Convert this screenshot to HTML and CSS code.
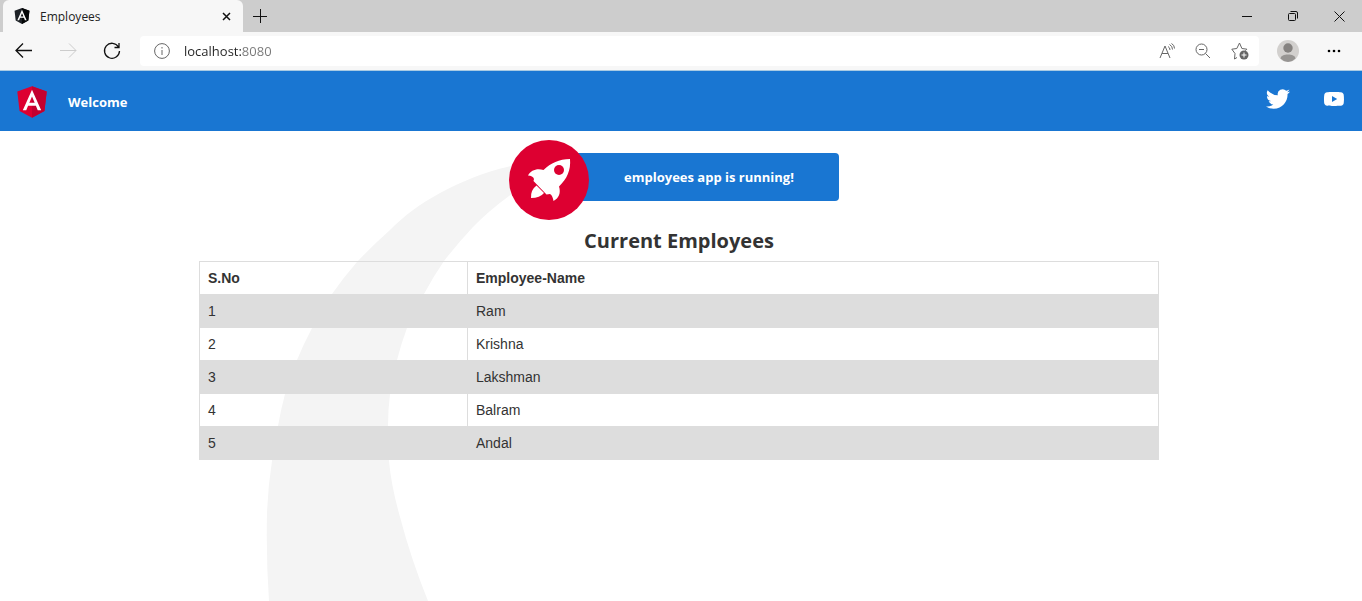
FILE: index.html
```html
<!DOCTYPE html>
<html lang="en">
<head>
<meta charset="utf-8">
<title>Employees</title>
<link rel="stylesheet" href="styles.css">
</head>
<body>
<div class="tab-strip">
  <div class="tab">
    <svg class="tab-icon" viewBox="30 30 190 200" aria-hidden="true"><path fill="#1d2126" d="M125 30 31.9 63.2l14.2 123.1L125 230l78.9-43.7 14.2-123.1z"/><path fill="#050708" d="M125 30v200l78.9-43.7 14.2-123.1z"/><path fill="#fff" d="M125 52.1 66.8 182.6h21.7l11.7-29.2h49.4l11.7 29.2H183zm17 83.3h-34l17-40.9z"/></svg>
    <span class="tab-title">Employees</span>
    <button class="icon-button" aria-label="Close tab"><svg width="9" height="9" viewBox="0 0 9 9"><path class="line bold" d="M1 1l7 7M8 1 1 8"/></svg></button>
  </div>
  <button class="icon-button new-tab" aria-label="New tab"><svg width="14" height="14" viewBox="0 0 14 14"><path class="line" d="M7.500 0v14M0 7.500h14"/></svg></button>
  <div class="window-controls">
    <button class="icon-button" aria-label="Minimize"><svg width="10" height="10" viewBox="0 0 10 10"><path class="line" d="M0 5.500h10"/></svg></button>
    <button class="icon-button" aria-label="Restore"><svg width="10" height="10" viewBox="0 0 10 10"><rect class="line" x=".5" y="2.5" width="7" height="7" rx="1"/><path class="line" d="M2.500.5H8Q9.500.5 9.500 2v5.500"/></svg></button>
    <button class="icon-button" aria-label="Close"><svg width="11" height="11" viewBox="0 0 11 11"><path class="line" d="M.5.5l10 10M10.500.5l-10 10"/></svg></button>
  </div>
</div>
<div class="nav-bar">
  <div class="nav-buttons">
    <button class="icon-button" aria-label="Back"><svg width="18" height="16" viewBox="0 0 18 16"><path class="line thick" d="M17 7.500H1M8 .5l-7 7 7 7"/></svg></button>
    <button class="icon-button faded" aria-label="Forward" disabled><svg width="18" height="16" viewBox="0 0 18 16"><path class="line" d="M1 7.500h16M10 .5l7 7-7 7"/></svg></button>
    <button class="icon-button" aria-label="Refresh"><svg width="18" height="18" viewBox="0 0 18 18"><path class="line thick" d="M15.500 5A7.500 7.500 0 1 0 16.500 9M16 1v4.500h-4.500"/></svg></button>
  </div>
  <div class="address-bar">
    <button class="icon-button grey" aria-label="Site information"><svg width="16" height="16" viewBox="0 0 16 16"><circle class="line" cx="8" cy="8" r="7.400"/><path class="line" d="M8 7v5M8 4v1.500"/></svg></button>
    <input class="address" type="text" value="localhost:8080" aria-label="Address" spellcheck="false">
    <div class="address-actions">
      <button class="icon-button grey" aria-label="Read aloud"><svg width="16" height="16" viewBox="0 0 16 16"><path class="line" d="M1 15 6 3l5 12M3 10.500h6M9 3.500q2 1 2 3.500M10.500 1.500Q13.500 3 13.500 6.500M12.500.5Q15.500 2 15.500 5.500"/></svg></button>
      <button class="icon-button grey" aria-label="Zoom out"><svg width="16" height="16" viewBox="0 0 16 16"><circle class="line" cx="6.500" cy="6.500" r="5.500"/><path class="line" d="M10.500 10.500 15 15M4 6.500h5"/></svg></button>
      <button class="icon-button grey" aria-label="Add to favorites"><svg width="18" height="18" viewBox="0 0 18 18"><path class="line" d="M6 15.500 3.500 17l.5-5.500L.8 7.200l5-.7L8.500 1l2.400 5.500 5 .7-1.500 1.500"/><circle cx="13" cy="13" r="4.500" fill="#666"/><path stroke="#fff" d="M13 10.500v5M10.500 13h5"/></svg></button>
    </div>
  </div>
  <button class="icon-button profile" aria-label="Profile"><svg width="22" height="22" viewBox="0 0 22 22"><circle cx="11" cy="11" r="11" fill="#d2d0ce"/><circle cx="11" cy="8" r="4.700" fill="#858280"/><path fill="#979593" d="M3.500 18.500C4 15.500 7 14.500 11 14.500s7 1 7.500 4A11 11 0 0 1 11 22a11 11 0 0 1-7.500-3.500"/></svg></button>
  <button class="icon-button menu" aria-label="Settings and more"><svg width="14" height="4" viewBox="0 0 14 4"><circle cx="2" cy="2" r="1.300"/><circle cx="7" cy="2" r="1.300"/><circle cx="12" cy="2" r="1.300"/></svg></button>
</div>

<header class="toolbar">
  <svg class="logo" viewBox="30 30 190 200" role="img" aria-label="Angular Logo"><path fill="#dd0031" d="M125 30 31.9 63.2l14.2 123.1L125 230l78.9-43.7 14.2-123.1z"/><path fill="#c3002f" d="M125 30v200l78.9-43.7 14.2-123.1z"/><path fill="#fff" d="M125 52.1 66.8 182.6h21.7l11.7-29.2h49.4l11.7 29.2H183zm17 83.3h-34l17-40.9z"/></svg>
  <span>Welcome</span>
  <nav class="social">
    <a href="#" aria-label="Twitter"><svg width="24" height="20" viewBox="75 98 250 204"><path fill="#fff" d="M153.62,301.59c94.34,0,145.94-78.16,145.94-145.94,0-2.22,0-4.43-.15-6.63A104.36,104.36,0,0,0,325,122.47a102.38,102.38,0,0,1-29.46,8.07,51.47,51.47,0,0,0,22.55-28.37,102.79,102.79,0,0,1-32.57,12.45,51.34,51.34,0,0,0-87.41,46.78A145.62,145.62,0,0,1,92.4,107.81a51.33,51.33,0,0,0,15.88,68.47A50.91,50.91,0,0,1,85,169.86c0,.21,0,.43,0,.65a51.31,51.31,0,0,0,41.15,50.28,51.21,51.21,0,0,1-23.16.88,51.35,51.35,0,0,0,47.92,35.62,102.92,102.92,0,0,1-63.7,22A104.41,104.41,0,0,1,75,278.55a145.21,145.21,0,0,0,78.62,23"/></svg></a>
    <a href="#" aria-label="YouTube"><svg width="20" height="14" viewBox="2 5 20 14"><path fill="#fff" d="M21.58 7.19c-.23-.86-.91-1.54-1.77-1.77C18.250 5 12 5 12 5s-6.250 0-7.810.42c-.86.23-1.540.91-1.770 1.770C2 8.750 2 12 2 12s0 3.250.42 4.810c.23.86.91 1.540 1.770 1.770C5.750 19 12 19 12 19s6.250 0 7.810-.42c.86-.23 1.540-.91 1.770-1.770C22 15.250 22 12 22 12s0-3.250-.42-4.810zM10 15V9l5.200 3-5.200 3z"/></svg></a>
  </nav>
</header>

<main class="content">
  <svg class="trail" width="260" height="470" viewBox="260 131 260 470" aria-hidden="true"><path fill="#f4f4f4" d="M520 164C486 171 465 180 440 193C420 204 405 215 390 230Q372 246 357 262Q343 278 332 294Q321 310 312 328Q304 343 297 360Q290 377 285 394Q281 409 278 426Q274 443 272 461Q268 486 267 513Q266 558 269 601H428Q411 559 400 517Q391 485 389 461Q387 443 388 426Q388 410 390 394Q392 377 397 360Q401 344 407 328Q414 311 424 294Q433 277 444 261Q458 243 473 227Q490 209 520 188Z"/></svg>
  <div class="highlight-card">
    <svg class="rocket" width="80" height="80" viewBox="0 0 80 80" role="img" aria-label="Rocket Ship"><circle cx="40" cy="40" r="40" fill="#dd0031"/><path fill="#fff" d="M61 19C50 19 42 23 34.500 30C28 28 22 30 19 35.500C22 35.500 24.500 37 25 39L24.500 41L37.500 54.500L41 54C43 55 44 58 44.500 61C50 58 52 53 50 46.500C58 39 62 30 61 19Z"/><circle cx="50" cy="30" r="5" fill="#dd0031"/><path fill="#fff" d="M27.500 45.500 35 53Q31 58 22 58 21.500 50 27.500 45.500Z"/></svg>
    <span>employees app is running!</span>
  </div>
  <h2>Current Employees</h2>
  <table>
    <colgroup><col class="number-col"><col></colgroup>
    <thead><tr><th>S.No</th><th>Employee-Name</th></tr></thead>
    <tbody>
      <tr><td>1</td><td>Ram</td></tr>
      <tr><td>2</td><td>Krishna</td></tr>
      <tr><td>3</td><td>Lakshman</td></tr>
      <tr><td>4</td><td>Balram</td></tr>
      <tr><td>5</td><td>Andal</td></tr>
    </tbody>
  </table>
</main>
</body>
</html>
```
FILE: styles.css
```css
* { box-sizing: border-box; }

body {
  margin: 0;
  min-height: 100vh;
  display: flex;
  flex-direction: column;
  background: #fff;
  color: #333;
  font-family: "Open Sans", "Noto Sans", sans-serif;
  font-size: 14px;
}

svg { display: block; }
.line { fill: none; stroke: currentColor; stroke-width: 1; }
.line.thick { stroke-width: 1.3; }
.line.bold { stroke-width: 1.5; }

.icon-button {
  display: flex;
  align-items: center;
  justify-content: center;
  padding: 0;
  border: 0;
  background: none;
  color: #111;
}
.icon-button.faded { color: #ccc; }
.icon-button.grey { color: #666; }

/* Browser frame */
.tab-strip {
  display: flex;
  height: 32px;
  padding-left: 3px;
  background: #cdcdcd;
}
.tab {
  display: flex;
  align-items: center;
  gap: 10px;
  width: 240px;
  padding: 0 12px 0 11px;
  border-radius: 6px 6px 0 0;
  background: #f7f7f7;
}
.tab-icon { width: 16px; height: 16px; }
.tab-title { flex: 1; font: 12px "Open Sans", sans-serif; color: #222; }
.new-tab { width: 34px; }
.window-controls { display: flex; margin-left: auto; }
.window-controls .icon-button { width: 46px; }

.nav-bar {
  display: flex;
  align-items: center;
  height: 39px;
  padding: 0 11px 0 2px;
  border-bottom: 1px solid #a9cbe3;
  background: #f7f7f7;
}
.nav-buttons { display: flex; width: 138px; }
.nav-buttons .icon-button { width: 44px; }
.address-bar {
  flex: 1;
  display: flex;
  align-items: center;
  height: 30px;
  padding: 0 10px 0 14px;
  border-radius: 4px;
  background: #fff;
}
.address {
  flex: 1;
  min-width: 0;
  margin-left: 14px;
  padding: 0;
  border: 0;
  outline: 0;
  font: 13px "Open Sans", sans-serif;
  color: #222;
  background: linear-gradient(to right, #222 58px, #777 58px);
  -webkit-background-clip: text;
  background-clip: text;
  -webkit-text-fill-color: transparent;
}
.address-actions { display: flex; gap: 20px; }
.profile { width: 58px; }
.menu { width: 34px; }

/* Application */
.toolbar {
  display: flex;
  align-items: center;
  height: 60px;
  padding: 1px 18px 0 17px;
  background: #1976d2;
  color: #fff;
  font-size: 13px;
  font-weight: 700;
}
.logo { width: 30px; height: 32px; margin-right: 21px; }
.social {
  display: flex;
  align-items: center;
  gap: 34px;
  margin-left: auto;
  padding-bottom: 5px;
}

.content {
  position: relative;
  flex: 1;
  display: flex;
  flex-direction: column;
  align-items: center;
  padding: 22px 4px 0 0;
  overflow: hidden;
}
.trail { position: absolute; top: 0; left: calc(50% - 421px); }

.highlight-card {
  position: relative;
  display: flex;
  align-items: center;
  justify-content: center;
  width: 320px;
  height: 48px;
  padding-left: 60px;
  border-radius: 4px;
  background: #1976d2;
  color: #fff;
  font-size: 13px;
  font-weight: 700;
}
.rocket { position: absolute; top: -13px; left: -10px; }

h2 {
  position: relative;
  margin: 24px 0 5px;
  font-size: 20px;
  line-height: 31px;
  font-weight: 700;
}

table {
  position: relative;
  width: 960px;
  max-width: 100%;
  table-layout: fixed;
  border-collapse: collapse;
  font-family: "Liberation Sans", Arial, sans-serif;
  font-size: 14px;
  line-height: 16px;
}
.number-col { width: 268px; }
th, td { padding: 8px; border: 1px solid #ddd; text-align: left; }
tbody tr:nth-child(odd) { background: #ddd; }
```
